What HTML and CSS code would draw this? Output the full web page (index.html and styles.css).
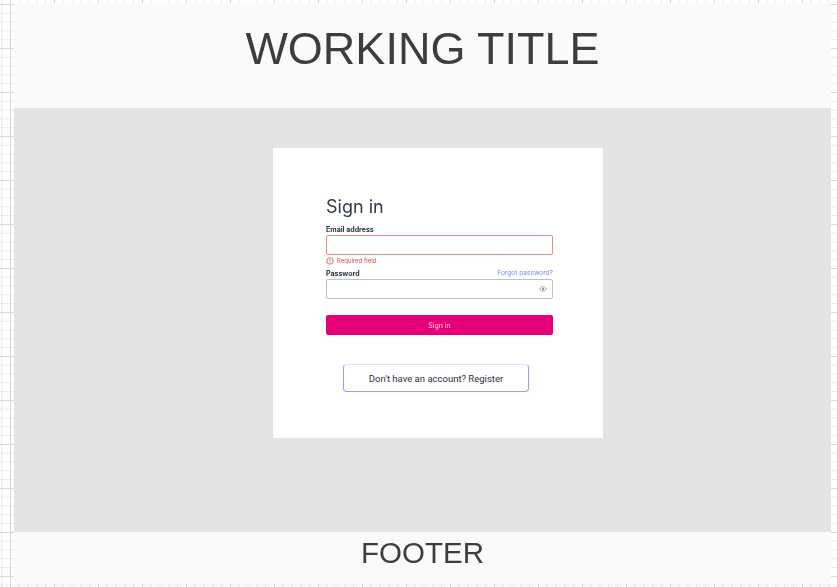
FILE: index.html
```html
<!DOCTYPE html>
<html lang="en">
<head>
    <meta charset="UTF-8">
    <meta name="viewport" content="width=device-width, initial-scale=1.0">
    <title>Working Title</title>
    <link rel="stylesheet" href="styles.css">
</head>
<body>
    <div class="page">
        <header class="page-header"><span class="band-text">WORKING TITLE</span></header>
        <main class="page-main">
            <div class="card">
                <form class="signin-form">
                    <h2>Sign in</h2>
                    <div class="label-row">
                        <label for="email">Email address</label>
                    </div>
                    <input type="text" id="email" class="field field-error">
                    <div class="error-row">
                        <svg class="error-icon" viewBox="0 0 8 8" width="8" height="8">
                            <circle cx="4" cy="4" r="3.2" fill="none" stroke="#d9484f" stroke-width="0.8"/>
                            <path d="M4 2.2V4.4M4 5.2V5.9" stroke="#d9484f" stroke-width="0.8"/>
                        </svg>
                        <span>Required field</span>
                    </div>
                    <div class="label-row">
                        <label for="password">Password</label>
                        <a href="#" class="forgot">Forgot password?</a>
                    </div>
                    <div class="password-wrap">
                        <input type="password" id="password" class="field field-password">
                        <svg class="eye-icon" viewBox="0 0 10 8" width="8" height="6">
                            <path d="M0.7 4C2 1.8 3.4 1 5 1S8 1.8 9.3 4C8 6.2 6.6 7 5 7S2 6.2 0.7 4Z" fill="none" stroke="#7f868f" stroke-width="1"/>
                            <circle cx="5" cy="4" r="1.5" fill="#7f868f"/>
                        </svg>
                    </div>
                    <button type="submit" class="signin-btn">Sign in</button>
                </form>
                <div class="register-box">Don't have an account? Register</div>
            </div>
        </main>
        <footer class="page-footer"><span class="band-text">FOOTER</span></footer>
    </div>
</body>
</html>
```

FILE: styles.css
```css
/* General Styling */
html, body {
    height: 100%;
}

body {
    margin: 0;
    overflow: hidden;
    font-family: 'Inter', 'Liberation Sans', sans-serif;
    background-color: #fff;
    background-image:
        linear-gradient(to right, #d9d9d9 1px, transparent 1px),
        linear-gradient(to bottom, #d9d9d9 1px, transparent 1px),
        linear-gradient(to right, #ebebeb 1px, transparent 1px),
        linear-gradient(to bottom, #ebebeb 1px, transparent 1px);
    background-size: 44px 44px, 44px 44px, 8.8px 8.8px, 8.8px 8.8px;
    background-position: 10px 4px, 10px 4px, 1.2px 4px, 1.2px 4px;
}

.page {
    display: flex;
    flex-direction: column;
    width: 817px;
    height: 581px;
    margin: 3px 0 0 14px;
}

.page-header {
    height: 105px;
    padding-bottom: 14px;
    box-sizing: border-box;
    display: flex;
    align-items: center;
    justify-content: center;
    background: #fafafa;
    font-family: 'Liberation Sans', Arial, sans-serif;
    font-size: 45px;
    color: #3b3b3b;
}

.band-text {
    opacity: 0.99;
}

.page-main {
    height: 424px;
    padding: 40px 0 0 259px;
    box-sizing: border-box;
    background: #e4e4e4;
}

.page-footer {
    height: 52px;
    padding-bottom: 10px;
    box-sizing: border-box;
    display: flex;
    align-items: center;
    justify-content: center;
    background: #fafafa;
    font-family: 'Liberation Sans', Arial, sans-serif;
    font-size: 29.5px;
    color: #3b3b3b;
}

/* Sign in card */
.card {
    width: 330px;
    height: 290px;
    padding: 48px 50px 0 53px;
    box-sizing: border-box;
    background: #fff;
}

.signin-form {
    display: flex;
    flex-direction: column;
    filter: blur(0.35px);
}

h2 {
    margin: 0 0 6px;
    font-size: 18px;
    line-height: 22px;
    font-weight: 400;
    color: #333c4a;
}

.label-row {
    display: flex;
    justify-content: space-between;
    align-items: center;
    height: 10px;
    margin-bottom: 1px;
}

label {
    font-size: 7px;
    font-weight: 700;
    color: #2a3342;
}

.field {
    display: block;
    width: 100%;
    height: 20px;
    padding: 0 5px;
    border-radius: 2px;
    background: #fff;
    box-sizing: border-box;
    outline: none;
}

.field-error {
    border: 1px solid #e58a8f;
}

.field-password {
    border: 1px solid #b9c0cf;
}

.error-row {
    display: flex;
    align-items: center;
    gap: 3px;
    height: 11px;
    margin-bottom: 2px;
    font-size: 6px;
    color: #d9484f;
}

.error-icon {
    flex: none;
}

.forgot {
    font-size: 6.6px;
    line-height: 11px;
    color: #7b86f2;
    text-decoration: none;
}

.password-wrap {
    position: relative;
}

.eye-icon {
    position: absolute;
    top: 7px;
    right: 6px;
}

.signin-btn {
    height: 20px;
    margin-top: 16px;
    border: none;
    border-radius: 2px;
    background: #e6007a;
    color: #fbd5e8;
    font-family: inherit;
    font-size: 7px;
    cursor: pointer;
}

.register-box {
    display: flex;
    align-items: center;
    justify-content: center;
    width: 186px;
    height: 28px;
    margin: 29px 0 0 17px;
    border: 1px solid #9b9bf5;
    border-top-color: #e2e2fb;
    border-radius: 4px;
    box-sizing: border-box;
    font-family: 'Roboto', sans-serif;
    font-size: 9.5px;
    color: #2a3040;
}
```
